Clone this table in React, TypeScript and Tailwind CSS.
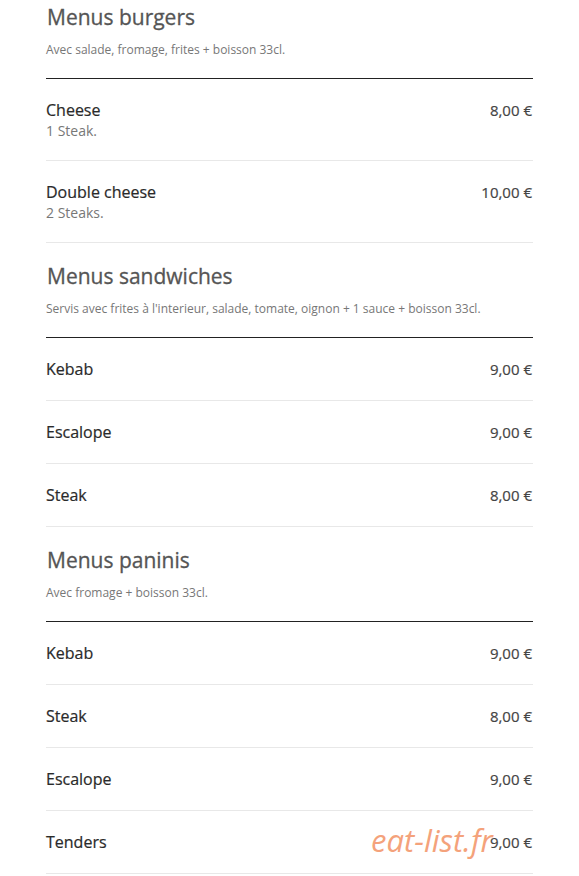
import React from "react";

type Item = { name: string; desc?: string; price: string };
type Section = { title: string; subtitle: string; items: Item[] };

const sections: Section[] = [
  {
    title: "Menus burgers",
    subtitle: "Avec salade, fromage, frites + boisson 33cl.",
    items: [
      { name: "Cheese", desc: "1 Steak.", price: "8,00 €" },
      { name: "Double cheese", desc: "2 Steaks.", price: "10,00 €" },
    ],
  },
  {
    title: "Menus sandwiches",
    subtitle:
      "Servis avec frites à l'interieur, salade, tomate, oignon + 1 sauce + boisson 33cl.",
    items: [
      { name: "Kebab", price: "9,00 €" },
      { name: "Escalope", price: "9,00 €" },
      { name: "Steak", price: "8,00 €" },
    ],
  },
  {
    title: "Menus paninis",
    subtitle: "Avec fromage + boisson 33cl.",
    items: [
      { name: "Kebab", price: "9,00 €" },
      { name: "Steak", price: "8,00 €" },
      { name: "Escalope", price: "9,00 €" },
      { name: "Tenders", price: "9,00 €" },
    ],
  },
];

export default function App() {
  return (
    <div
      className="relative w-[579px] min-h-[876px] bg-white px-[46px]"
      style={{ fontFamily: '"Open Sans", "Liberation Sans", sans-serif' }}
    >
      {sections.map((s, i) => (
        <section key={s.title}>
          <div
            className={
              i === 0
                ? "pt-[3px] pb-[19px] border-b border-[#222]"
                : "pt-[19px] pb-[19px] border-b border-[#222]"
            }
          >
            <h2 className="text-[21px] leading-[28px] font-normal text-[#555] pl-px [-webkit-text-stroke:0.3px_#555]">
              {s.title}
            </h2>
            <p className="mt-[10px] text-[12px] leading-[18px] text-[#777]">
              {s.subtitle}
            </p>
          </div>
          {s.items.map((it, j) => (
            <div
              key={j}
              className="flex items-start justify-between py-[20px] border-b border-[#e8e8e8]"
            >
              <div className="flex flex-col">
                <span className="text-[16px] leading-[22px] font-normal text-[#2a2a2a] [-webkit-text-stroke:0.2px_#2a2a2a]">
                  {it.name}
                </span>
                {it.desc && (
                  <span className="text-[14px] leading-[19px] text-[#777]">
                    {it.desc}
                  </span>
                )}
              </div>
              <span className="text-[15px] leading-[22px] font-normal text-[#444] pr-px [-webkit-text-stroke:0.2px_#444]">
                {it.price}
              </span>
            </div>
          ))}
        </section>
      ))}
      <div className="absolute left-[371px] top-[825px] text-[31px] leading-[31px] italic font-normal text-[#f4a27b] pointer-events-none">
        eat-list.fr
      </div>
    </div>
  );
}
